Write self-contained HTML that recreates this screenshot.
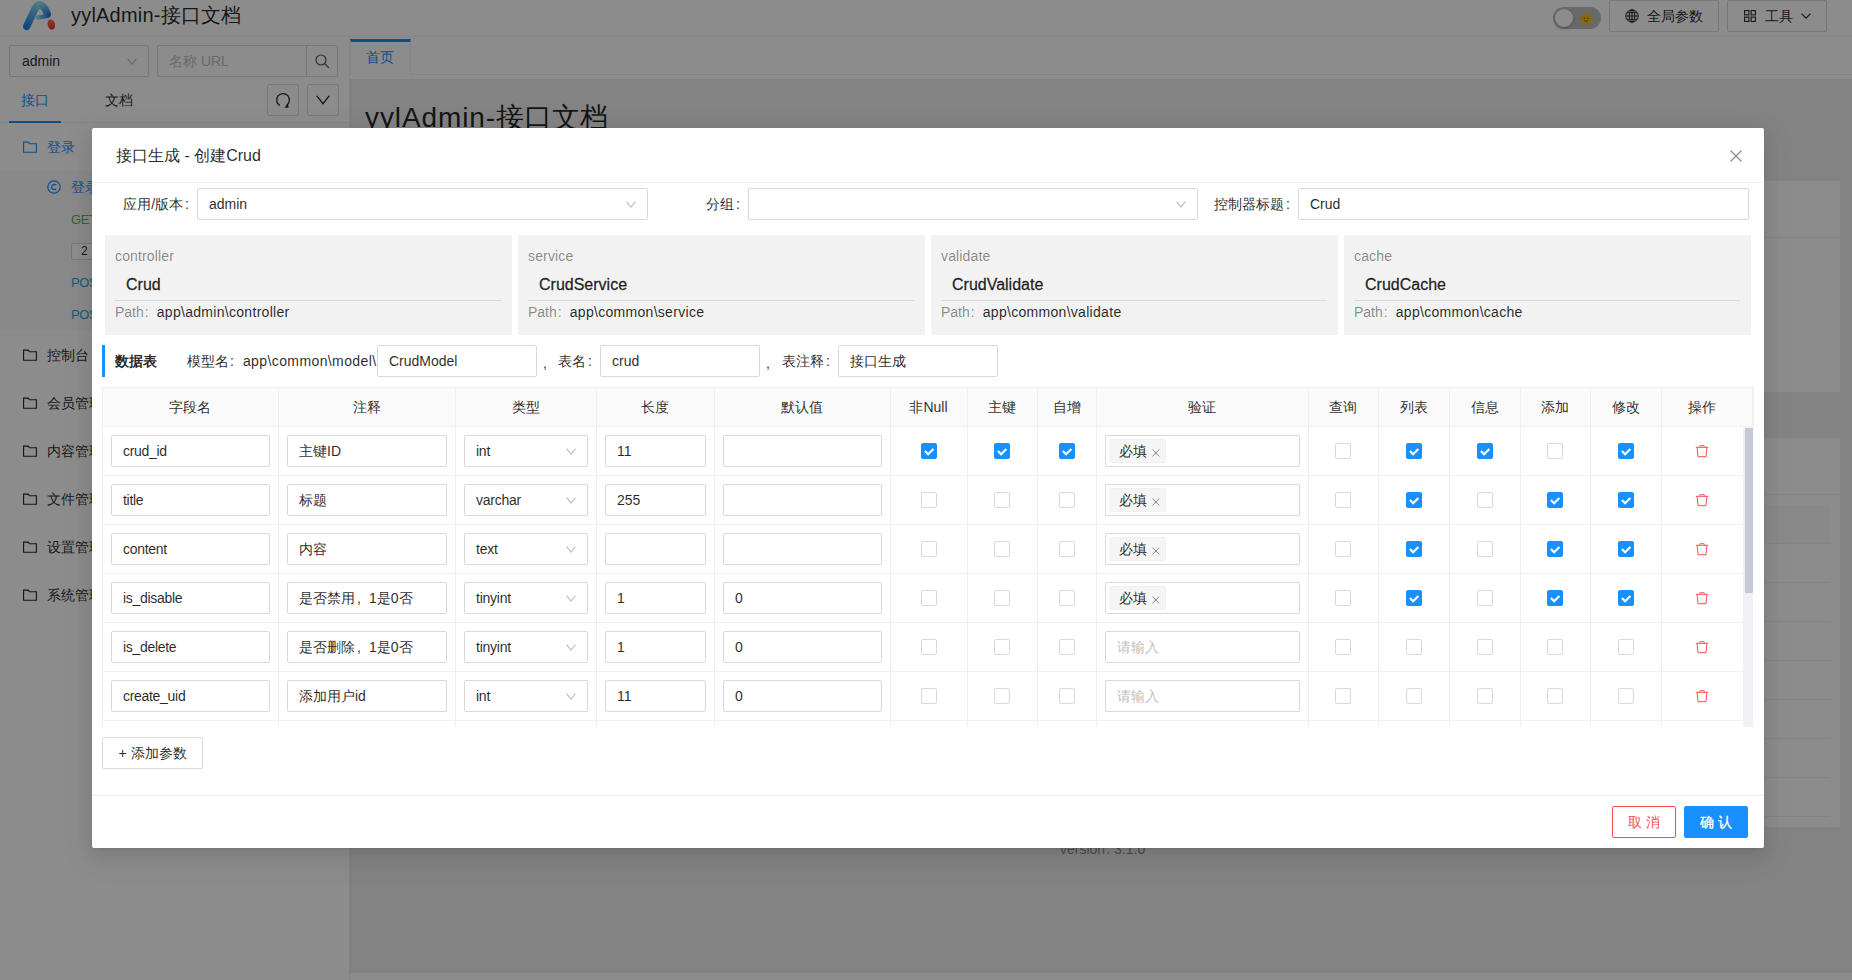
<!DOCTYPE html><html><head><meta charset="utf-8"><style>
*{box-sizing:border-box;margin:0;padding:0}
html,body{width:1852px;height:980px;overflow:hidden;-webkit-font-smoothing:antialiased}
body{position:relative;font-family:"Liberation Sans",sans-serif;font-size:14px;color:rgba(0,0,0,.85);background:#efefef}
.ab{position:absolute}
.t{position:absolute;white-space:nowrap}
.inp{position:absolute;border:1px solid #d9d9d9;border-radius:2px;background:#fff}
.inp>span{position:absolute;left:11px;top:0;line-height:30px;white-space:nowrap;color:rgba(0,0,0,.85)}
.inp>span.ph{color:#bfbfbf}
.inp svg{position:absolute}
.hl{position:absolute;background:#f0f0f0}
.cb{position:absolute;width:16px;height:16px;border:1px solid #d9d9d9;border-radius:2px;background:#fff}
.cb.on{background:#1890ff;border-color:#1890ff}
.cb svg{position:absolute;left:-1px;top:-1px}
.btn{position:absolute;border:1px solid #d9d9d9;border-radius:2px;background:#fff;text-align:center;white-space:nowrap}
.tag{position:absolute;background:#f5f5f5;border:1px solid #f0f0f0;border-radius:2px;height:24px}
.tag>span{position:absolute;left:8px;top:0;line-height:22px}
</style></head><body>
<div class="ab" style="left:350px;top:79px;width:1502px;height:901px;background:#efefef;box-shadow:inset 3px 0 3px -2px rgba(0,0,0,.06)"></div>
<div class="ab" style="left:350px;top:973px;width:1502px;height:7px;background:#fff"></div>
<div class="t" style="left:365px;top:97.5px;height:40px;line-height:40px;font-size:28px;color:rgba(0,0,0,.85);"><span style="letter-spacing:.9px">yylAdmin-</span>接口文档</div>
<div class="ab" style="left:360px;top:181px;width:1480px;height:211px;background:#fff"></div>
<div class="hl" style="left:360px;top:237px;width:1480px;height:1px"></div>
<div class="ab" style="left:360px;top:438px;width:1480px;height:389px;background:#fff"></div>
<div class="hl" style="left:360px;top:494px;width:1480px;height:1px"></div>
<div class="ab" style="left:370px;top:505px;width:1460px;height:39px;background:#fafafa"></div>
<div class="hl" style="left:370px;top:543px;width:1460px;height:1px"></div>
<div class="hl" style="left:370px;top:582px;width:1460px;height:1px"></div>
<div class="hl" style="left:370px;top:621px;width:1460px;height:1px"></div>
<div class="hl" style="left:370px;top:660px;width:1460px;height:1px"></div>
<div class="hl" style="left:370px;top:699px;width:1460px;height:1px"></div>
<div class="hl" style="left:370px;top:738px;width:1460px;height:1px"></div>
<div class="hl" style="left:370px;top:777px;width:1460px;height:1px"></div>
<div class="hl" style="left:370px;top:816px;width:1460px;height:1px"></div>
<div class="t" style="left:1060px;top:838.0px;height:22px;line-height:22px;font-size:14px;color:rgba(0,0,0,.45);">version<span style="margin:0 4px 0 1px">:</span>3.1.0</div>
<div class="ab" style="left:350px;top:35px;width:1502px;height:44px;background:#fff"></div>
<div class="hl" style="left:350px;top:74px;width:1502px;height:1px"></div>
<div class="ab" style="left:350px;top:39px;width:61px;height:36px;background:#fff;border:1px solid #f0f0f0;border-top:3px solid #1890ff;border-bottom:0"></div>
<div class="t" style="left:366px;top:46.0px;height:22px;line-height:22px;font-size:14px;color:#1890ff;">首页</div>
<div class="ab" style="left:0;top:0;width:1852px;height:35px;background:#fff;box-shadow:0 1px 4px rgba(0,21,41,.08);z-index:2"></div>
<svg class="ab" style="left:15px;top:0;z-index:3" width="50" height="35" viewBox="0 0 50 35"><defs><linearGradient id="lg1" gradientUnits="userSpaceOnUse" x1="11" y1="28" x2="24" y2="2"><stop offset="0" stop-color="#1a7fe8"/><stop offset="1" stop-color="#8ee0ee"/></linearGradient><linearGradient id="lg3" gradientUnits="userSpaceOnUse" x1="26" y1="3" x2="35" y2="16"><stop offset="0" stop-color="#8ee0ee"/><stop offset="1" stop-color="#1a78e6"/></linearGradient><linearGradient id="lg4" gradientUnits="userSpaceOnUse" x1="21" y1="17" x2="35" y2="15"><stop offset="0" stop-color="#9ae8ee"/><stop offset="1" stop-color="#1a74e4"/></linearGradient><linearGradient id="lg2" x1="0" y1="0" x2="0" y2="1"><stop offset="0" stop-color="#ff7a4a"/><stop offset="1" stop-color="#f0222a"/></linearGradient></defs><path d="M11.8 26.3L19.8 9.2Q22.8 3.8 25.6 5" stroke="url(#lg1)" stroke-width="7.4" stroke-linecap="round" stroke-linejoin="round" fill="none"/><path d="M25 5.3Q27.6 5 30 8.8L32.4 14" stroke="url(#lg3)" stroke-width="7.2" stroke-linecap="round" fill="none"/><path d="M22.8 17.6L32.8 15.8" stroke="url(#lg4)" stroke-width="4.4" stroke-linecap="round" fill="none"/><ellipse cx="36.3" cy="24.4" rx="3.6" ry="5.3" transform="rotate(-14 36.3 24.4)" fill="url(#lg2)"/></svg>
<div class="t" style="left:71px;top:0;height:32px;line-height:30px;font-size:20px;z-index:3"><span style="letter-spacing:.2px">yylAdmin-</span>接口文档</div>
<div class="ab" style="left:1553px;top:7px;width:48px;height:22px;border-radius:11px;background:rgba(0,0,0,.25);z-index:3"></div>
<div class="ab" style="left:1555px;top:9px;width:18px;height:18px;border-radius:9px;background:#fff;box-shadow:0 2px 4px rgba(0,35,11,.2);z-index:3"></div>
<svg class="ab" style="left:1578px;top:11px;z-index:3" width="16" height="16" viewBox="0 0 16 16"><g fill="#f4c20d"><circle cx="8" cy="8" r="5"/><path d="M8 0.5l1.2 3h-2.4zM8 15.5l1.2-3h-2.4zM0.5 8l3 1.2v-2.4zM15.5 8l-3 1.2v-2.4zM2.7 2.7l3 1.3-1.7 1.7zM13.3 13.3l-3-1.3 1.7-1.7zM13.3 2.7l-1.3 3-1.7-1.7zM2.7 13.3l1.3-3 1.7 1.7z"/></g><circle cx="6.3" cy="7.2" r=".7" fill="#6b4a00"/><circle cx="9.7" cy="7.2" r=".7" fill="#6b4a00"/><path d="M6 9.5q2 1.6 4 0" stroke="#6b4a00" stroke-width=".7" fill="none"/></svg>
<div class="btn" style="left:1609px;top:0;width:110px;height:32px;z-index:3"></div>
<svg class="ab" style="left:1625px;top:9px;z-index:3" width="14" height="14" viewBox="0 0 14 14"><g stroke="#262626" stroke-width="1" fill="none"><circle cx="7" cy="7" r="6.2"/><ellipse cx="7" cy="7" rx="2.8" ry="6.2"/><path d="M7 .8v12.4M.8 7h12.4M1.8 3.8h10.4M1.8 10.2h10.4"/></g></svg>
<div class="t" style="left:1647px;top:5.0px;height:22px;line-height:22px;font-size:14px;color:rgba(0,0,0,.85);z-index:3">全局参数</div>
<div class="btn" style="left:1727px;top:0;width:100px;height:32px;z-index:3"></div>
<svg class="ab" style="left:1744px;top:10px;z-index:3" width="12" height="12" viewBox="0 0 12 12"><g stroke="#262626" stroke-width="1.1" fill="none"><rect x=".6" y=".6" width="4.3" height="4.3"/><rect x="7.1" y=".6" width="4.3" height="4.3"/><rect x=".6" y="7.1" width="4.3" height="4.3"/><rect x="7.1" y="7.1" width="4.3" height="4.3"/></g></svg>
<div class="t" style="left:1765px;top:5.0px;height:22px;line-height:22px;font-size:14px;color:rgba(0,0,0,.85);z-index:3">工具</div>
<svg class="ab" style="left:1801px;top:13px;z-index:3" width="10" height="6" viewBox="0 0 10 6"><path d="M.6 .6L5 5.2L9.4 .6" stroke="#262626" stroke-width="1.1" fill="none"/></svg>
<div class="ab" style="left:0;top:35px;width:350px;height:945px;background:#fff;border-right:1px solid #f0f0f0"></div>
<div class="inp" style="left:9px;top:45px;width:140px;height:32px"><span class="" style="left:12px;line-height:30px;letter-spacing:0px">admin</span><svg width="10" height="7" viewBox="0 0 10 7" style="right:11px;top:11.5px"><path d="M0.6 0.6L5 6.2L9.4 0.6" stroke="#bfbfbf" stroke-width="1.1" fill="none"/></svg></div>
<div class="inp" style="left:157px;top:45px;width:181px;height:32px"><span class="ph">名称 URL</span><div class="ab" style="left:148px;top:0;width:1px;height:30px;background:#d9d9d9"></div><svg class="ab" style="left:157px;top:8px" width="15" height="15" viewBox="0 0 15 15"><circle cx="6" cy="6" r="5" stroke="#595959" stroke-width="1.2" fill="none"/><path d="M9.6 9.6L13.8 13.8" stroke="#595959" stroke-width="1.3"/></svg></div>
<div class="t" style="left:21px;top:89.0px;height:22px;line-height:22px;font-size:14px;color:#1890ff;">接口</div>
<div class="t" style="left:105px;top:89.0px;height:22px;line-height:22px;font-size:14px;color:rgba(0,0,0,.85);">文档</div>
<div class="hl" style="left:0;top:122px;width:349px;height:1px"></div>
<div class="ab" style="left:9px;top:121px;width:52px;height:2px;background:#1890ff"></div>
<div class="btn" style="left:267px;top:84px;width:32px;height:32px"><svg class="ab" style="left:7px;top:7px" width="16" height="16" viewBox="0 0 16 16"><path d="M4.8 13.5A6.4 6.4 0 1 1 11.6 13.3" stroke="#262626" stroke-width="1.3" fill="none"/><path d="M9.6 15.8L13.6 15.8L13 11.6z" fill="#262626"/></svg></div>
<div class="btn" style="left:307px;top:84px;width:32px;height:32px"><svg class="ab" style="left:8px;top:10px" width="14" height="10" viewBox="0 0 14 10"><path d="M.8 .8L7 8.6L13.2 .8" stroke="#262626" stroke-width="1.3" fill="none"/></svg></div>
<svg class="ab" style="left:23px;top:141px" width="14" height="12" viewBox="0 0 14 12"><path d="M.6 1.1h4.6l1.3 1.6h6.9v8.6H.6z" stroke="#1890ff" stroke-width="1.1" fill="none"/></svg>
<div class="t" style="left:47px;top:136.0px;height:22px;line-height:22px;font-size:14px;color:#1890ff;">登录</div>
<div class="ab" style="left:0;top:171px;width:349px;height:159px;background:#fafafa"></div>
<svg class="ab" style="left:47px;top:180px" width="14" height="14" viewBox="0 0 14 14"><circle cx="7" cy="7" r="6.2" stroke="#1890ff" stroke-width="1.2" fill="none"/><path d="M9.2 5.2A2.6 2.6 0 1 0 9.2 8.8" stroke="#1890ff" stroke-width="1.3" fill="none"/></svg>
<div class="t" style="left:71px;top:176.0px;height:22px;line-height:22px;font-size:14px;color:#1890ff;">登录</div>
<div class="t" style="left:71px;top:210.0px;height:20px;line-height:20px;font-size:13px;color:#64b048;letter-spacing:-.4px">GET</div>
<div class="ab" style="left:71px;top:243px;width:30px;height:17px;border:1px solid #d9d9d9;border-radius:2px;background:#fff;font-size:12px;line-height:15px;padding-left:9px">2</div>
<div class="t" style="left:71px;top:273.0px;height:20px;line-height:20px;font-size:13px;color:#3aa0dc;letter-spacing:-.4px">POST</div>
<div class="t" style="left:71px;top:305.0px;height:20px;line-height:20px;font-size:13px;color:#3aa0dc;letter-spacing:-.4px">POST</div>
<svg class="ab" style="left:23px;top:349px" width="14" height="12" viewBox="0 0 14 12"><path d="M.6 1.1h4.6l1.3 1.6h6.9v8.6H.6z" stroke="#262626" stroke-width="1.1" fill="none"/></svg>
<div class="t" style="left:47px;top:344.0px;height:22px;line-height:22px;font-size:14px;color:rgba(0,0,0,.85);">控制台</div>
<svg class="ab" style="left:23px;top:397px" width="14" height="12" viewBox="0 0 14 12"><path d="M.6 1.1h4.6l1.3 1.6h6.9v8.6H.6z" stroke="#262626" stroke-width="1.1" fill="none"/></svg>
<div class="t" style="left:47px;top:392.0px;height:22px;line-height:22px;font-size:14px;color:rgba(0,0,0,.85);">会员管理</div>
<svg class="ab" style="left:23px;top:445px" width="14" height="12" viewBox="0 0 14 12"><path d="M.6 1.1h4.6l1.3 1.6h6.9v8.6H.6z" stroke="#262626" stroke-width="1.1" fill="none"/></svg>
<div class="t" style="left:47px;top:440.0px;height:22px;line-height:22px;font-size:14px;color:rgba(0,0,0,.85);">内容管理</div>
<svg class="ab" style="left:23px;top:493px" width="14" height="12" viewBox="0 0 14 12"><path d="M.6 1.1h4.6l1.3 1.6h6.9v8.6H.6z" stroke="#262626" stroke-width="1.1" fill="none"/></svg>
<div class="t" style="left:47px;top:488.0px;height:22px;line-height:22px;font-size:14px;color:rgba(0,0,0,.85);">文件管理</div>
<svg class="ab" style="left:23px;top:541px" width="14" height="12" viewBox="0 0 14 12"><path d="M.6 1.1h4.6l1.3 1.6h6.9v8.6H.6z" stroke="#262626" stroke-width="1.1" fill="none"/></svg>
<div class="t" style="left:47px;top:536.0px;height:22px;line-height:22px;font-size:14px;color:rgba(0,0,0,.85);">设置管理</div>
<svg class="ab" style="left:23px;top:589px" width="14" height="12" viewBox="0 0 14 12"><path d="M.6 1.1h4.6l1.3 1.6h6.9v8.6H.6z" stroke="#262626" stroke-width="1.1" fill="none"/></svg>
<div class="t" style="left:47px;top:584.0px;height:22px;line-height:22px;font-size:14px;color:rgba(0,0,0,.85);">系统管理</div>
<div class="ab" style="left:0;top:0;width:1852px;height:980px;background:rgba(0,0,0,.45);z-index:10"></div>
<div class="ab" style="left:92px;top:128px;width:1672px;height:720px;background:#fff;border-radius:2px;z-index:11;box-shadow:0 3px 6px -4px rgba(0,0,0,.12),0 6px 16px 0 rgba(0,0,0,.08),0 9px 28px 8px rgba(0,0,0,.05)"></div>
<div id="m" class="ab" style="left:0;top:0;width:1852px;height:980px;z-index:12">
<div class="t" style="left:116px;top:142.5px;height:25px;line-height:25px;font-size:16px;color:rgba(0,0,0,.85);">接口生成 - 创建Crud</div>
<svg class="ab" style="left:1729px;top:149px" width="14" height="14" viewBox="0 0 14 14"><path d="M1.5 1.5L12.5 12.5M12.5 1.5L1.5 12.5" stroke="rgba(0,0,0,.45)" stroke-width="1.3" fill="none"/></svg>
<div class="hl" style="left:92px;top:182px;width:1672px;height:1px"></div>
<div class="t" style="right:1663px;top:193.0px;height:22px;line-height:22px;font-size:14px;color:rgba(0,0,0,.85);">应用/版本<span style="margin-left:2px">:</span></div>
<div class="inp" style="left:197px;top:188px;width:451px;height:32px"><span class="" style="left:11px;line-height:30px;letter-spacing:0px">admin</span><svg width="10" height="7" viewBox="0 0 10 7" style="right:11px;top:11.5px"><path d="M0.6 0.6L5 6.2L9.4 0.6" stroke="#bfbfbf" stroke-width="1.1" fill="none"/></svg></div>
<div class="t" style="right:1112px;top:193.0px;height:22px;line-height:22px;font-size:14px;color:rgba(0,0,0,.85);">分组<span style="margin-left:2px">:</span></div>
<div class="inp" style="left:748px;top:188px;width:450px;height:32px"><svg width="10" height="7" viewBox="0 0 10 7" style="right:11px;top:11.5px"><path d="M0.6 0.6L5 6.2L9.4 0.6" stroke="#bfbfbf" stroke-width="1.1" fill="none"/></svg></div>
<div class="t" style="right:562px;top:193.0px;height:22px;line-height:22px;font-size:14px;color:rgba(0,0,0,.85);">控制器标题<span style="margin-left:2px">:</span></div>
<div class="inp" style="left:1298px;top:188px;width:451px;height:32px"><span class="" style="left:11px;line-height:30px;letter-spacing:0px">Crud</span></div>
<div class="ab" style="left:105px;top:235px;width:407px;height:100px;background:#f2f2f2"></div>
<div class="t" style="left:115px;top:245.0px;height:22px;line-height:22px;font-size:14px;color:rgba(0,0,0,.45);letter-spacing:.15px">controller</div>
<div class="t" style="left:126px;top:271.5px;height:25px;line-height:25px;font-size:16px;color:rgba(0,0,0,.85);-webkit-text-stroke:0.3px rgba(0,0,0,.85)">Crud</div>
<div class="ab" style="left:115px;top:300px;width:386px;height:1px;background:#d9d9d9"></div>
<div class="t" style="left:115px;top:301.0px;height:22px;line-height:22px;font-size:14px;color:rgba(0,0,0,.85);"><span style="color:rgba(0,0,0,.45)">Path<span style="margin:0 8px 0 1px">:</span></span><span style="letter-spacing:.3px">app\admin\controller</span></div>
<div class="ab" style="left:518px;top:235px;width:407px;height:100px;background:#f2f2f2"></div>
<div class="t" style="left:528px;top:245.0px;height:22px;line-height:22px;font-size:14px;color:rgba(0,0,0,.45);letter-spacing:.15px">service</div>
<div class="t" style="left:539px;top:271.5px;height:25px;line-height:25px;font-size:16px;color:rgba(0,0,0,.85);-webkit-text-stroke:0.3px rgba(0,0,0,.85)">CrudService</div>
<div class="ab" style="left:528px;top:300px;width:386px;height:1px;background:#d9d9d9"></div>
<div class="t" style="left:528px;top:301.0px;height:22px;line-height:22px;font-size:14px;color:rgba(0,0,0,.85);"><span style="color:rgba(0,0,0,.45)">Path<span style="margin:0 8px 0 1px">:</span></span><span style="letter-spacing:.3px">app\common\service</span></div>
<div class="ab" style="left:931px;top:235px;width:407px;height:100px;background:#f2f2f2"></div>
<div class="t" style="left:941px;top:245.0px;height:22px;line-height:22px;font-size:14px;color:rgba(0,0,0,.45);letter-spacing:.15px">validate</div>
<div class="t" style="left:952px;top:271.5px;height:25px;line-height:25px;font-size:16px;color:rgba(0,0,0,.85);-webkit-text-stroke:0.3px rgba(0,0,0,.85)">CrudValidate</div>
<div class="ab" style="left:941px;top:300px;width:386px;height:1px;background:#d9d9d9"></div>
<div class="t" style="left:941px;top:301.0px;height:22px;line-height:22px;font-size:14px;color:rgba(0,0,0,.85);"><span style="color:rgba(0,0,0,.45)">Path<span style="margin:0 8px 0 1px">:</span></span><span style="letter-spacing:.3px">app\common\validate</span></div>
<div class="ab" style="left:1344px;top:235px;width:407px;height:100px;background:#f2f2f2"></div>
<div class="t" style="left:1354px;top:245.0px;height:22px;line-height:22px;font-size:14px;color:rgba(0,0,0,.45);letter-spacing:.15px">cache</div>
<div class="t" style="left:1365px;top:271.5px;height:25px;line-height:25px;font-size:16px;color:rgba(0,0,0,.85);-webkit-text-stroke:0.3px rgba(0,0,0,.85)">CrudCache</div>
<div class="ab" style="left:1354px;top:300px;width:386px;height:1px;background:#d9d9d9"></div>
<div class="t" style="left:1354px;top:301.0px;height:22px;line-height:22px;font-size:14px;color:rgba(0,0,0,.85);"><span style="color:rgba(0,0,0,.45)">Path<span style="margin:0 8px 0 1px">:</span></span><span style="letter-spacing:.3px">app\common\cache</span></div>
<div class="ab" style="left:102px;top:345px;width:3px;height:32px;background:#1890ff"></div>
<div class="t" style="left:115px;top:350.0px;height:22px;line-height:22px;font-size:14px;color:rgba(0,0,0,.85);font-weight:bold">数据表</div>
<div class="t" style="left:187px;top:350.0px;height:22px;line-height:22px;font-size:14px;color:rgba(0,0,0,.85);">模型名<span style="margin:0 9px 0 1px">:</span><span style="letter-spacing:.4px">app\common\model\</span></div>
<div class="inp" style="left:377px;top:345px;width:160px;height:32px"><span class="" style="left:11px;line-height:30px;letter-spacing:0px">CrudModel</span></div>
<div class="t" style="left:543px;top:352.0px;height:22px;line-height:22px;font-size:14px;color:rgba(0,0,0,.85);">,</div>
<div class="t" style="left:558px;top:350.0px;height:22px;line-height:22px;font-size:14px;color:rgba(0,0,0,.85);">表名<span style="margin-left:2px">:</span></div>
<div class="inp" style="left:600px;top:345px;width:160px;height:32px"><span class="" style="left:11px;line-height:30px;letter-spacing:0px">crud</span></div>
<div class="t" style="left:766px;top:352.0px;height:22px;line-height:22px;font-size:14px;color:rgba(0,0,0,.85);">,</div>
<div class="t" style="left:782px;top:350.0px;height:22px;line-height:22px;font-size:14px;color:rgba(0,0,0,.85);">表注释<span style="margin-left:2px">:</span></div>
<div class="inp" style="left:838px;top:345px;width:160px;height:32px"><span class="" style="left:11px;line-height:30px;letter-spacing:0px">接口生成</span></div>
<div class="ab" style="left:102px;top:387px;width:1652px;height:40px;background:#fafafa;border:1px solid #f0f0f0"></div>
<div class="t" style="left:102px;top:388px;width:176px;height:38px;line-height:38px;text-align:center">字段名</div>
<div class="t" style="left:278px;top:388px;width:177px;height:38px;line-height:38px;text-align:center">注释</div>
<div class="hl" style="left:278px;top:387px;width:1px;height:340px"></div>
<div class="t" style="left:455px;top:388px;width:141px;height:38px;line-height:38px;text-align:center">类型</div>
<div class="hl" style="left:455px;top:387px;width:1px;height:340px"></div>
<div class="t" style="left:596px;top:388px;width:118px;height:38px;line-height:38px;text-align:center">长度</div>
<div class="hl" style="left:596px;top:387px;width:1px;height:340px"></div>
<div class="t" style="left:714px;top:388px;width:176px;height:38px;line-height:38px;text-align:center">默认值</div>
<div class="hl" style="left:714px;top:387px;width:1px;height:340px"></div>
<div class="t" style="left:890px;top:388px;width:77px;height:38px;line-height:38px;text-align:center">非Null</div>
<div class="hl" style="left:890px;top:387px;width:1px;height:340px"></div>
<div class="t" style="left:967px;top:388px;width:70px;height:38px;line-height:38px;text-align:center">主键</div>
<div class="hl" style="left:967px;top:387px;width:1px;height:340px"></div>
<div class="t" style="left:1037px;top:388px;width:59px;height:38px;line-height:38px;text-align:center">自增</div>
<div class="hl" style="left:1037px;top:387px;width:1px;height:340px"></div>
<div class="t" style="left:1096px;top:388px;width:212px;height:38px;line-height:38px;text-align:center">验证</div>
<div class="hl" style="left:1096px;top:387px;width:1px;height:340px"></div>
<div class="t" style="left:1308px;top:388px;width:70px;height:38px;line-height:38px;text-align:center">查询</div>
<div class="hl" style="left:1308px;top:387px;width:1px;height:340px"></div>
<div class="t" style="left:1378px;top:388px;width:71px;height:38px;line-height:38px;text-align:center">列表</div>
<div class="hl" style="left:1378px;top:387px;width:1px;height:340px"></div>
<div class="t" style="left:1449px;top:388px;width:71px;height:38px;line-height:38px;text-align:center">信息</div>
<div class="hl" style="left:1449px;top:387px;width:1px;height:340px"></div>
<div class="t" style="left:1520px;top:388px;width:70px;height:38px;line-height:38px;text-align:center">添加</div>
<div class="hl" style="left:1520px;top:387px;width:1px;height:340px"></div>
<div class="t" style="left:1590px;top:388px;width:71px;height:38px;line-height:38px;text-align:center">修改</div>
<div class="hl" style="left:1590px;top:387px;width:1px;height:340px"></div>
<div class="t" style="left:1661px;top:388px;width:82px;height:38px;line-height:38px;text-align:center">操作</div>
<div class="hl" style="left:1661px;top:387px;width:1px;height:340px"></div>
<div class="hl" style="left:102px;top:387px;width:1px;height:340px"></div>
<div class="hl" style="left:1752px;top:387px;width:1px;height:40px"></div>
<div class="hl" style="left:102px;top:475px;width:1641px;height:1px"></div>
<div class="inp" style="left:111px;top:435px;width:159px;height:32px"><span class="" style="left:11px;line-height:30px;letter-spacing:-0.3px">crud_id</span></div>
<div class="inp" style="left:287px;top:435px;width:160px;height:32px"><span class="" style="left:11px;line-height:30px;letter-spacing:0px">主键ID</span></div>
<div class="inp" style="left:464px;top:435px;width:124px;height:32px"><span class="" style="left:11px;line-height:30px;letter-spacing:-0.25px">int</span><svg width="10" height="7" viewBox="0 0 10 7" style="right:11px;top:11.5px"><path d="M0.6 0.6L5 6.2L9.4 0.6" stroke="#bfbfbf" stroke-width="1.1" fill="none"/></svg></div>
<div class="inp" style="left:605px;top:435px;width:101px;height:32px"><span class="" style="left:11px;line-height:30px;letter-spacing:0px">11</span></div>
<div class="inp" style="left:723px;top:435px;width:159px;height:32px"></div>
<div class="cb on" style="left:921px;top:443px"><svg width="16" height="16" viewBox="0 0 16 16"><path d="M3.9 8.1L7.1 11.3L12.4 5.9" stroke="#fff" stroke-width="2.1" fill="none"/></svg></div>
<div class="cb on" style="left:994px;top:443px"><svg width="16" height="16" viewBox="0 0 16 16"><path d="M3.9 8.1L7.1 11.3L12.4 5.9" stroke="#fff" stroke-width="2.1" fill="none"/></svg></div>
<div class="cb on" style="left:1059px;top:443px"><svg width="16" height="16" viewBox="0 0 16 16"><path d="M3.9 8.1L7.1 11.3L12.4 5.9" stroke="#fff" stroke-width="2.1" fill="none"/></svg></div>
<div class="inp" style="left:1105px;top:435px;width:195px;height:32px"></div>
<div class="tag" style="left:1110px;top:439px;width:56px"><span>必填</span><svg class="ab" style="left:41px;top:9px" width="8" height="8" viewBox="0 0 8 8"><path d="M0.6 0.6L7.2 7.4M7.2 0.6L0.6 7.4" stroke="rgba(0,0,0,.45)" stroke-width="1" fill="none"/></svg></div>
<div class="cb " style="left:1335px;top:443px"></div>
<div class="cb on" style="left:1406px;top:443px"><svg width="16" height="16" viewBox="0 0 16 16"><path d="M3.9 8.1L7.1 11.3L12.4 5.9" stroke="#fff" stroke-width="2.1" fill="none"/></svg></div>
<div class="cb on" style="left:1477px;top:443px"><svg width="16" height="16" viewBox="0 0 16 16"><path d="M3.9 8.1L7.1 11.3L12.4 5.9" stroke="#fff" stroke-width="2.1" fill="none"/></svg></div>
<div class="cb " style="left:1547px;top:443px"></div>
<div class="cb on" style="left:1618px;top:443px"><svg width="16" height="16" viewBox="0 0 16 16"><path d="M3.9 8.1L7.1 11.3L12.4 5.9" stroke="#fff" stroke-width="2.1" fill="none"/></svg></div>
<svg class="ab" style="left:1695px;top:444px" width="14" height="14" viewBox="0 0 14 14"><path d="M4.6 3.2V2.3Q4.6 1.7 5.2 1.7h3.6q.6 0 .6.6v.9M0.8 3.3h12.4M2.1 3.4l.9 9.3h8l.9-9.3" stroke="#ff4d4f" stroke-width="1" fill="none"/></svg>
<div class="hl" style="left:102px;top:524px;width:1641px;height:1px"></div>
<div class="inp" style="left:111px;top:484px;width:159px;height:32px"><span class="" style="left:11px;line-height:30px;letter-spacing:-0.3px">title</span></div>
<div class="inp" style="left:287px;top:484px;width:160px;height:32px"><span class="" style="left:11px;line-height:30px;letter-spacing:0px">标题</span></div>
<div class="inp" style="left:464px;top:484px;width:124px;height:32px"><span class="" style="left:11px;line-height:30px;letter-spacing:-0.25px">varchar</span><svg width="10" height="7" viewBox="0 0 10 7" style="right:11px;top:11.5px"><path d="M0.6 0.6L5 6.2L9.4 0.6" stroke="#bfbfbf" stroke-width="1.1" fill="none"/></svg></div>
<div class="inp" style="left:605px;top:484px;width:101px;height:32px"><span class="" style="left:11px;line-height:30px;letter-spacing:0px">255</span></div>
<div class="inp" style="left:723px;top:484px;width:159px;height:32px"></div>
<div class="cb " style="left:921px;top:492px"></div>
<div class="cb " style="left:994px;top:492px"></div>
<div class="cb " style="left:1059px;top:492px"></div>
<div class="inp" style="left:1105px;top:484px;width:195px;height:32px"></div>
<div class="tag" style="left:1110px;top:488px;width:56px"><span>必填</span><svg class="ab" style="left:41px;top:9px" width="8" height="8" viewBox="0 0 8 8"><path d="M0.6 0.6L7.2 7.4M7.2 0.6L0.6 7.4" stroke="rgba(0,0,0,.45)" stroke-width="1" fill="none"/></svg></div>
<div class="cb " style="left:1335px;top:492px"></div>
<div class="cb on" style="left:1406px;top:492px"><svg width="16" height="16" viewBox="0 0 16 16"><path d="M3.9 8.1L7.1 11.3L12.4 5.9" stroke="#fff" stroke-width="2.1" fill="none"/></svg></div>
<div class="cb " style="left:1477px;top:492px"></div>
<div class="cb on" style="left:1547px;top:492px"><svg width="16" height="16" viewBox="0 0 16 16"><path d="M3.9 8.1L7.1 11.3L12.4 5.9" stroke="#fff" stroke-width="2.1" fill="none"/></svg></div>
<div class="cb on" style="left:1618px;top:492px"><svg width="16" height="16" viewBox="0 0 16 16"><path d="M3.9 8.1L7.1 11.3L12.4 5.9" stroke="#fff" stroke-width="2.1" fill="none"/></svg></div>
<svg class="ab" style="left:1695px;top:493px" width="14" height="14" viewBox="0 0 14 14"><path d="M4.6 3.2V2.3Q4.6 1.7 5.2 1.7h3.6q.6 0 .6.6v.9M0.8 3.3h12.4M2.1 3.4l.9 9.3h8l.9-9.3" stroke="#ff4d4f" stroke-width="1" fill="none"/></svg>
<div class="hl" style="left:102px;top:573px;width:1641px;height:1px"></div>
<div class="inp" style="left:111px;top:533px;width:159px;height:32px"><span class="" style="left:11px;line-height:30px;letter-spacing:-0.3px">content</span></div>
<div class="inp" style="left:287px;top:533px;width:160px;height:32px"><span class="" style="left:11px;line-height:30px;letter-spacing:0px">内容</span></div>
<div class="inp" style="left:464px;top:533px;width:124px;height:32px"><span class="" style="left:11px;line-height:30px;letter-spacing:-0.25px">text</span><svg width="10" height="7" viewBox="0 0 10 7" style="right:11px;top:11.5px"><path d="M0.6 0.6L5 6.2L9.4 0.6" stroke="#bfbfbf" stroke-width="1.1" fill="none"/></svg></div>
<div class="inp" style="left:605px;top:533px;width:101px;height:32px"></div>
<div class="inp" style="left:723px;top:533px;width:159px;height:32px"></div>
<div class="cb " style="left:921px;top:541px"></div>
<div class="cb " style="left:994px;top:541px"></div>
<div class="cb " style="left:1059px;top:541px"></div>
<div class="inp" style="left:1105px;top:533px;width:195px;height:32px"></div>
<div class="tag" style="left:1110px;top:537px;width:56px"><span>必填</span><svg class="ab" style="left:41px;top:9px" width="8" height="8" viewBox="0 0 8 8"><path d="M0.6 0.6L7.2 7.4M7.2 0.6L0.6 7.4" stroke="rgba(0,0,0,.45)" stroke-width="1" fill="none"/></svg></div>
<div class="cb " style="left:1335px;top:541px"></div>
<div class="cb on" style="left:1406px;top:541px"><svg width="16" height="16" viewBox="0 0 16 16"><path d="M3.9 8.1L7.1 11.3L12.4 5.9" stroke="#fff" stroke-width="2.1" fill="none"/></svg></div>
<div class="cb " style="left:1477px;top:541px"></div>
<div class="cb on" style="left:1547px;top:541px"><svg width="16" height="16" viewBox="0 0 16 16"><path d="M3.9 8.1L7.1 11.3L12.4 5.9" stroke="#fff" stroke-width="2.1" fill="none"/></svg></div>
<div class="cb on" style="left:1618px;top:541px"><svg width="16" height="16" viewBox="0 0 16 16"><path d="M3.9 8.1L7.1 11.3L12.4 5.9" stroke="#fff" stroke-width="2.1" fill="none"/></svg></div>
<svg class="ab" style="left:1695px;top:542px" width="14" height="14" viewBox="0 0 14 14"><path d="M4.6 3.2V2.3Q4.6 1.7 5.2 1.7h3.6q.6 0 .6.6v.9M0.8 3.3h12.4M2.1 3.4l.9 9.3h8l.9-9.3" stroke="#ff4d4f" stroke-width="1" fill="none"/></svg>
<div class="hl" style="left:102px;top:622px;width:1641px;height:1px"></div>
<div class="inp" style="left:111px;top:582px;width:159px;height:32px"><span class="" style="left:11px;line-height:30px;letter-spacing:-0.3px">is_disable</span></div>
<div class="inp" style="left:287px;top:582px;width:160px;height:32px"><span class="" style="left:11px;line-height:30px;letter-spacing:0px">是否禁用<span style="display:inline-block;width:14px;padding-left:2px">,</span>1是0否</span></div>
<div class="inp" style="left:464px;top:582px;width:124px;height:32px"><span class="" style="left:11px;line-height:30px;letter-spacing:-0.25px">tinyint</span><svg width="10" height="7" viewBox="0 0 10 7" style="right:11px;top:11.5px"><path d="M0.6 0.6L5 6.2L9.4 0.6" stroke="#bfbfbf" stroke-width="1.1" fill="none"/></svg></div>
<div class="inp" style="left:605px;top:582px;width:101px;height:32px"><span class="" style="left:11px;line-height:30px;letter-spacing:0px">1</span></div>
<div class="inp" style="left:723px;top:582px;width:159px;height:32px"><span class="" style="left:11px;line-height:30px;letter-spacing:0px">0</span></div>
<div class="cb " style="left:921px;top:590px"></div>
<div class="cb " style="left:994px;top:590px"></div>
<div class="cb " style="left:1059px;top:590px"></div>
<div class="inp" style="left:1105px;top:582px;width:195px;height:32px"></div>
<div class="tag" style="left:1110px;top:586px;width:56px"><span>必填</span><svg class="ab" style="left:41px;top:9px" width="8" height="8" viewBox="0 0 8 8"><path d="M0.6 0.6L7.2 7.4M7.2 0.6L0.6 7.4" stroke="rgba(0,0,0,.45)" stroke-width="1" fill="none"/></svg></div>
<div class="cb " style="left:1335px;top:590px"></div>
<div class="cb on" style="left:1406px;top:590px"><svg width="16" height="16" viewBox="0 0 16 16"><path d="M3.9 8.1L7.1 11.3L12.4 5.9" stroke="#fff" stroke-width="2.1" fill="none"/></svg></div>
<div class="cb " style="left:1477px;top:590px"></div>
<div class="cb on" style="left:1547px;top:590px"><svg width="16" height="16" viewBox="0 0 16 16"><path d="M3.9 8.1L7.1 11.3L12.4 5.9" stroke="#fff" stroke-width="2.1" fill="none"/></svg></div>
<div class="cb on" style="left:1618px;top:590px"><svg width="16" height="16" viewBox="0 0 16 16"><path d="M3.9 8.1L7.1 11.3L12.4 5.9" stroke="#fff" stroke-width="2.1" fill="none"/></svg></div>
<svg class="ab" style="left:1695px;top:591px" width="14" height="14" viewBox="0 0 14 14"><path d="M4.6 3.2V2.3Q4.6 1.7 5.2 1.7h3.6q.6 0 .6.6v.9M0.8 3.3h12.4M2.1 3.4l.9 9.3h8l.9-9.3" stroke="#ff4d4f" stroke-width="1" fill="none"/></svg>
<div class="hl" style="left:102px;top:671px;width:1641px;height:1px"></div>
<div class="inp" style="left:111px;top:631px;width:159px;height:32px"><span class="" style="left:11px;line-height:30px;letter-spacing:-0.3px">is_delete</span></div>
<div class="inp" style="left:287px;top:631px;width:160px;height:32px"><span class="" style="left:11px;line-height:30px;letter-spacing:0px">是否删除<span style="display:inline-block;width:14px;padding-left:2px">,</span>1是0否</span></div>
<div class="inp" style="left:464px;top:631px;width:124px;height:32px"><span class="" style="left:11px;line-height:30px;letter-spacing:-0.25px">tinyint</span><svg width="10" height="7" viewBox="0 0 10 7" style="right:11px;top:11.5px"><path d="M0.6 0.6L5 6.2L9.4 0.6" stroke="#bfbfbf" stroke-width="1.1" fill="none"/></svg></div>
<div class="inp" style="left:605px;top:631px;width:101px;height:32px"><span class="" style="left:11px;line-height:30px;letter-spacing:0px">1</span></div>
<div class="inp" style="left:723px;top:631px;width:159px;height:32px"><span class="" style="left:11px;line-height:30px;letter-spacing:0px">0</span></div>
<div class="cb " style="left:921px;top:639px"></div>
<div class="cb " style="left:994px;top:639px"></div>
<div class="cb " style="left:1059px;top:639px"></div>
<div class="inp" style="left:1105px;top:631px;width:195px;height:32px"></div>
<div class="t" style="left:1117px;top:631px;line-height:32px;color:#bfbfbf">请输入</div>
<div class="cb " style="left:1335px;top:639px"></div>
<div class="cb " style="left:1406px;top:639px"></div>
<div class="cb " style="left:1477px;top:639px"></div>
<div class="cb " style="left:1547px;top:639px"></div>
<div class="cb " style="left:1618px;top:639px"></div>
<svg class="ab" style="left:1695px;top:640px" width="14" height="14" viewBox="0 0 14 14"><path d="M4.6 3.2V2.3Q4.6 1.7 5.2 1.7h3.6q.6 0 .6.6v.9M0.8 3.3h12.4M2.1 3.4l.9 9.3h8l.9-9.3" stroke="#ff4d4f" stroke-width="1" fill="none"/></svg>
<div class="hl" style="left:102px;top:720px;width:1641px;height:1px"></div>
<div class="inp" style="left:111px;top:680px;width:159px;height:32px"><span class="" style="left:11px;line-height:30px;letter-spacing:-0.3px">create_uid</span></div>
<div class="inp" style="left:287px;top:680px;width:160px;height:32px"><span class="" style="left:11px;line-height:30px;letter-spacing:0px">添加用户id</span></div>
<div class="inp" style="left:464px;top:680px;width:124px;height:32px"><span class="" style="left:11px;line-height:30px;letter-spacing:-0.25px">int</span><svg width="10" height="7" viewBox="0 0 10 7" style="right:11px;top:11.5px"><path d="M0.6 0.6L5 6.2L9.4 0.6" stroke="#bfbfbf" stroke-width="1.1" fill="none"/></svg></div>
<div class="inp" style="left:605px;top:680px;width:101px;height:32px"><span class="" style="left:11px;line-height:30px;letter-spacing:0px">11</span></div>
<div class="inp" style="left:723px;top:680px;width:159px;height:32px"><span class="" style="left:11px;line-height:30px;letter-spacing:0px">0</span></div>
<div class="cb " style="left:921px;top:688px"></div>
<div class="cb " style="left:994px;top:688px"></div>
<div class="cb " style="left:1059px;top:688px"></div>
<div class="inp" style="left:1105px;top:680px;width:195px;height:32px"></div>
<div class="t" style="left:1117px;top:680px;line-height:32px;color:#bfbfbf">请输入</div>
<div class="cb " style="left:1335px;top:688px"></div>
<div class="cb " style="left:1406px;top:688px"></div>
<div class="cb " style="left:1477px;top:688px"></div>
<div class="cb " style="left:1547px;top:688px"></div>
<div class="cb " style="left:1618px;top:688px"></div>
<svg class="ab" style="left:1695px;top:689px" width="14" height="14" viewBox="0 0 14 14"><path d="M4.6 3.2V2.3Q4.6 1.7 5.2 1.7h3.6q.6 0 .6.6v.9M0.8 3.3h12.4M2.1 3.4l.9 9.3h8l.9-9.3" stroke="#ff4d4f" stroke-width="1" fill="none"/></svg>
<div class="ab" style="left:1743px;top:427px;width:10px;height:300px;background:#f0f1f5"></div>
<div class="ab" style="left:1745px;top:428px;width:8px;height:165px;background:#c5c9d3"></div>
<div class="btn" style="left:102px;top:737px;width:101px;height:32px;line-height:30px">+ 添加参数</div>
<div class="hl" style="left:92px;top:795px;width:1672px;height:1px"></div>
<div class="btn" style="left:1612px;top:806px;width:64px;height:32px;line-height:30px;border-color:#ff4d4f;color:#ff4d4f;letter-spacing:4px;text-indent:4px">取消</div>
<div class="btn" style="left:1684px;top:806px;width:64px;height:32px;line-height:30px;border-color:#1890ff;background:#1890ff;color:#fff;letter-spacing:4px;text-indent:4px;-webkit-text-stroke:.3px #fff">确认</div>
</div>
</body></html>
